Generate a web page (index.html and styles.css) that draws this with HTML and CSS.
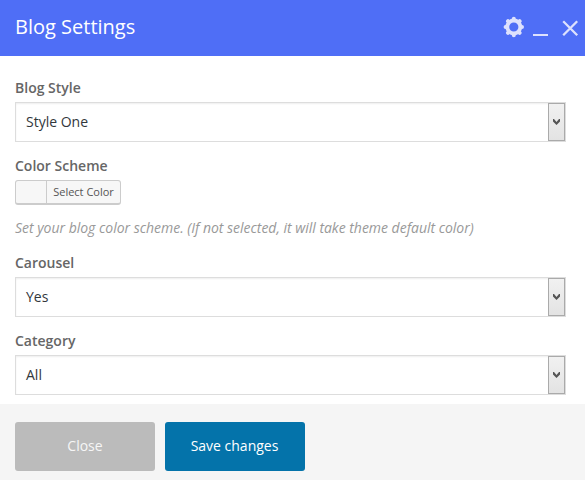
FILE: index.html
```html
<!DOCTYPE html>
<html lang="en">
<head>
<meta charset="utf-8">
<title>Blog Settings</title>
<link rel="stylesheet" href="styles.css">
</head>
<body>
<div class="panel">
  <header class="header">
    <h1 class="title">Blog Settings</h1>
    <svg class="controls" width="85" height="56" viewBox="500 0 85 56" fill="none" stroke="#dde1fd">
      <circle cx="513.8" cy="27" r="6.5" stroke-width="3.8"/>
      <path d="M513.8 19v-.2M519.5 21.3l.1-.1M521.8 27h.2M519.5 32.7l.1.1M513.8 35v.2M508.1 32.7l-.1.1M505.8 27h-.2M508.1 21.3l-.1-.1" stroke-width="4" stroke-linecap="round"/>
      <path d="M533 35h15" stroke-width="2"/>
      <path d="M563.2 21.2l14 14M577.2 21.2l-14 14" stroke-width="2.3"/>
    </svg>
  </header>
  <main class="body">
    <div class="label">Blog Style</div>
    <div class="select"><span class="value">Style One</span><span class="arrow"><svg width="7" height="6" viewBox="0 0 7 6"><path d="M0 0h1l2.5 3L6 0h1v2.4L3.5 6 0 2.4z" fill="#555"/></svg></span></div>
    <div class="label">Color Scheme</div>
    <div class="picker"><span class="swatch"></span><span class="picker-text">Select Color</span></div>
    <p class="description">Set your blog color scheme. (If not selected, it will take theme default color)</p>
    <div class="label">Carousel</div>
    <div class="select"><span class="value">Yes</span><span class="arrow"><svg width="7" height="6" viewBox="0 0 7 6"><path d="M0 0h1l2.5 3L6 0h1v2.4L3.5 6 0 2.4z" fill="#555"/></svg></span></div>
    <div class="label">Category</div>
    <div class="select"><span class="value">All</span><span class="arrow"><svg width="7" height="6" viewBox="0 0 7 6"><path d="M0 0h1l2.5 3L6 0h1v2.4L3.5 6 0 2.4z" fill="#555"/></svg></span></div>
  </main>
  <footer class="footer">
    <div class="button close">Close</div>
    <div class="button save">Save changes</div>
  </footer>
</div>
</body>
</html>
```
FILE: styles.css
```css
* { box-sizing: border-box; }
body { margin: 0; background: #fff; font-family: "Open Sans", sans-serif; font-size: 14px; }
.panel { width: 585px; height: 480px; display: flex; flex-direction: column; overflow: hidden; }
.header { height: 56px; flex: none; background: #4f6ef6; display: flex; justify-content: space-between; align-items: center; padding-left: 15px; }
.title { margin: 0; color: #fff; font-size: 20px; font-weight: 400; line-height: 28px; padding-bottom: 2px; }
.controls { display: block; }
.body { height: 348px; flex: none; padding: 24px 19px 0 15px; }
.label { height: 22px; line-height: 16px; font-weight: 600; color: #666; }
.select { height: 40px; margin-bottom: 16px; border: 1px solid #ddd; box-shadow: inset 0 1px 2px rgba(0,0,0,.07); display: flex; justify-content: space-between; }
.value { padding-left: 10px; line-height: 38px; color: #32373c; }
.arrow { width: 17px; border: 1px solid #aaa; background: linear-gradient(#f1f1f1, #e3e3e3); display: flex; align-items: center; justify-content: center; }
.picker { width: 106px; height: 25px; border: 1px solid #ccc; border-bottom-width: 2px; border-radius: 3px; background: #f7f7f7; display: flex; }
.swatch { width: 31px; border-right: 1px solid #ccc; }
.picker-text { flex: 1; text-align: center; font-size: 11px; line-height: 22px; color: #555; white-space: nowrap; }
.description { margin: 14px 0 18px; height: 18px; line-height: 18px; font-style: italic; letter-spacing: -.02px; color: #999; white-space: nowrap; }
.footer { height: 76px; background: #f5f5f5; padding: 18px 15px 0; display: flex; gap: 10px; }
.button { width: 140px; height: 49px; border-radius: 3px; color: #fff; text-align: center; line-height: 47px; }
.close { background: #bbb; color: #f6f6f6; }
.save { background: #0473aa; padding-right: 1px; }
```
